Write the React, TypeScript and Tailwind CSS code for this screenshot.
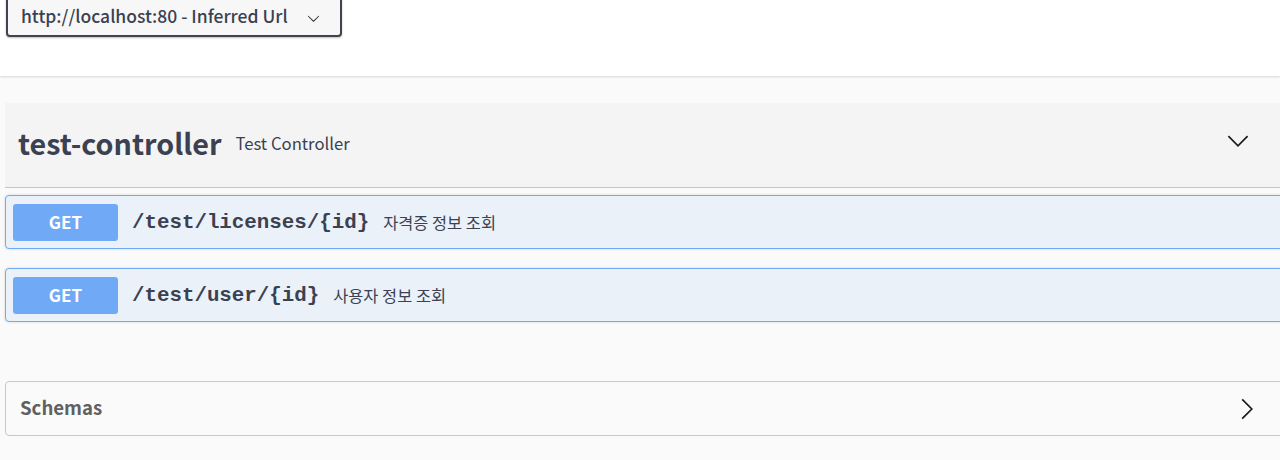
import React from 'react';

const sans = { fontFamily: '"Noto Sans CJK KR", "Noto Sans", sans-serif' };

const ChevronDown: React.FC<{ className?: string }> = ({ className }) => (
  <svg viewBox="0 0 20 20" className={className} fill="currentColor">
    <path d="M17.418 6.109c.272-.268.709-.268.979 0s.271.701 0 .969l-7.908 7.83c-.27.268-.707.268-.979 0l-7.908-7.83c-.27-.268-.27-.701 0-.969.271-.268.709-.268.979 0L10 13.25l7.418-7.141z" />
  </svg>
);

const Operation: React.FC<{ path: string; summary: string }> = ({ path, summary }) => (
  <div className="flex items-center h-[54px] border border-[#6eaaf5] rounded-[4px] bg-[#ebf1f9] px-[7px] shadow-[0_0_3px_rgba(0,0,0,0.15)]">
    <span className="w-[105px] h-[37px] flex items-center justify-center rounded-[3px] bg-[#70aaf7] text-white text-[17px] font-bold" style={sans}>
      GET
    </span>
    <span className="ml-[14px] mt-[2px] text-[20.8px] font-bold text-[#3b4151]" style={{ fontFamily: '"Liberation Mono", monospace' }}>
      {path}
    </span>
    <span className="ml-[14px] text-[16.4px] text-[#3b4151]" style={sans}>
      {summary}
    </span>
  </div>
);

export default function App() {
  return (
    <div className="w-[1280px] h-[460px] overflow-hidden bg-[#fafafa]" style={sans}>
      <div className="h-[76px] bg-white shadow-[0_1px_2px_rgba(0,0,0,0.15)] relative">
        <div className="absolute left-[6px] top-[-6px] w-[336px] h-[43px] border-2 border-[#41444e] rounded-[4px] bg-[#f7f7f7] shadow-[0_1px_2px_rgba(0,0,0,0.25)] flex items-center pl-[13px] pr-[20px]">
          <span className="text-[17.5px] font-medium text-[#3b4151] pt-[1px]">http://localhost:80 - Inferred Url</span>
          <ChevronDown className="ml-auto mt-[5px] w-[13px] h-[13px] text-[#303030]" />
        </div>
      </div>

      <div className="w-[1300px] ml-[5px] mt-[27px]">
        <div className="h-[85px] bg-[#f4f4f4] border-b border-[#c4c6cb] flex items-center pl-[13px]">
          <span className="text-[28.7px] font-bold text-[#3b4151] mb-[5px]">test-controller</span>
          <span className="ml-[14px] text-[16.7px] text-[#3b4151] mb-[2px]">Test Controller</span>
          <svg viewBox="0 0 20 20" className="ml-auto mr-[55px] mb-[9px] w-[24px] h-[24px]" fill="none" stroke="#1a1a1a" strokeWidth="1.4">
            <path d="M2 6l8 8 8-8" />
          </svg>
        </div>

        <div className="mt-[7px] flex flex-col gap-[19px]">
          <Operation path="/test/licenses/{id}" summary="자격증 정보 조회" />
          <Operation path="/test/user/{id}" summary="사용자 정보 조회" />
        </div>

        <div className="mt-[59px] h-[55px] border border-[#c8c9cc] rounded-[4px] flex items-center pl-[14px]">
          <span className="text-[18.6px] font-bold text-[#606060] mb-[3px]">Schemas</span>
          <svg viewBox="0 0 20 20" className="ml-auto mr-[45px] w-[24px] h-[24px]" fill="none" stroke="#1a1a1a" strokeWidth="1.4">
            <path d="M6 2l8 8-8 8" />
          </svg>
        </div>
      </div>
    </div>
  );
}
